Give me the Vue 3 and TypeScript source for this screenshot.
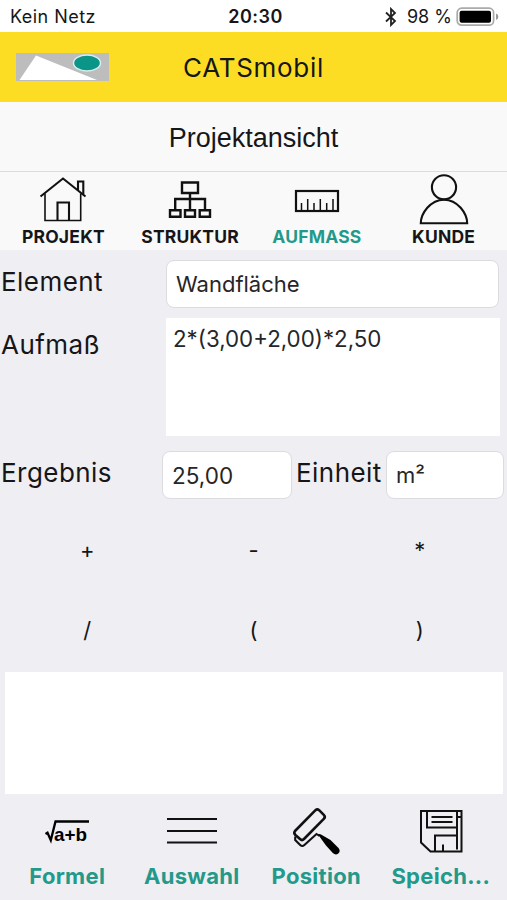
<script setup lang="ts">
import { ref } from 'vue'

interface Item {
  id: string
  label: string
}

const tabs: Item[] = [
  { id: 'projekt', label: 'PROJEKT' },
  { id: 'struktur', label: 'STRUKTUR' },
  { id: 'aufmass', label: 'AUFMASS' },
  { id: 'kunde', label: 'KUNDE' },
]
const actions: Item[] = [
  { id: 'formel', label: 'Formel' },
  { id: 'auswahl', label: 'Auswahl' },
  { id: 'position', label: 'Position' },
  { id: 'speichern', label: 'Speich...' },
]
const keys = ['+', '-', '*', '/', '(', ')']

const activeTab = ref('aufmass')
const element = ref('Wandfläche')
const formula = ref('2*(3,00+2,00)*2,50')
const result = ref('25,00')
const unit = ref('m²')

function append(key: string): void {
  formula.value += key
}
</script>

<template>
  <div class="screen">
    <div class="status">
      <span class="carrier">Kein Netz</span>
      <span class="clock">20:30</span>
      <span class="power">
        <svg class="bluetooth" width="14" height="20" viewBox="0 0 14 20">
          <path d="M2 5.5 11 14 7 18V2l4 4-9 8.5" fill="none" stroke="#222" stroke-width="1.8" />
        </svg>
        <span class="percent">98 %</span>
        <svg class="battery" width="43" height="20" viewBox="0 0 43 20">
          <rect x="1.2" y="1.2" width="36.4" height="17" rx="4.5" fill="#fff" stroke="#aaa" stroke-width="1.7" />
          <rect x="3.6" y="3.7" width="31.4" height="12" rx="2" fill="#000" />
          <path d="M40 6.5q2.4 1 2.4 3.2T40 13z" fill="#999" />
        </svg>
      </span>
    </div>

    <header class="brand">
      <svg class="logo" width="93" height="28" viewBox="0 0 93 28">
        <rect width="93" height="28" fill="#bdbdbd" />
        <path d="M3.5 27 20 2.5 81 27z" fill="#fff" />
        <ellipse cx="71" cy="10" rx="13.5" ry="8" fill="#0b9488" stroke="#d5efec" stroke-width="1.5" />
      </svg>
      <h1 class="app-name">CATSmobil</h1>
    </header>

    <div class="view-title"><h2>Projektansicht</h2></div>

    <nav class="tabs">
      <button
        v-for="tab in tabs"
        :key="tab.id"
        class="tab"
        :class="{ active: tab.id === activeTab }"
        @click="activeTab = tab.id"
      >
        <svg width="54" height="56" viewBox="0 1 54 56" fill="none" stroke="#111" stroke-width="1.8">
          <g v-if="tab.id === 'projekt'">
            <path d="M4.5 25.5 27 7.5 49.5 25.5" stroke-width="2.1" />
            <path d="M9 22.5V49.5H44.7V22.5" stroke-width="1.6" />
            <path d="M21.5 49V31.5H33V49" stroke-width="2.1" />
            <path d="M42 19V10.5h5.3V23.5" stroke-width="2.1" />
          </g>
          <g v-else-if="tab.id === 'struktur'" stroke-width="2.4">
            <path d="M19 11.5H35V22H19zM27 22v17M12.2 39V28H42V39" />
            <path d="M7 39.2h10.5v6.6H7zM22 39.2h10v6.6H22zM36.7 39.2h10.3v6.6H36.7z" />
          </g>
          <g v-else-if="tab.id === 'aufmass'">
            <rect x="6" y="20" width="42" height="20" stroke-width="2.2" />
            <path d="M11.5 39v-7M17.7 39V28M24 39v-7M30.3 39V28M36.7 39v-7M43 39V28" stroke-width="1.5" />
          </g>
          <g v-else stroke-width="2.1">
            <circle cx="27" cy="16.3" r="12.1" />
            <path d="M3.800 52.300q0-8 6.500-15.500Q17.500 28.700 27 28.700t16.700 8Q50.200 44.300 50.200 52.300z" />
          </g>
        </svg>
        <span class="tab-label">{{ tab.label }}</span>
      </button>
    </nav>

    <main class="form">
      <div class="row element-row">
        <label for="element">Element</label>
        <input id="element" v-model="element" class="field" />
      </div>
      <div class="row formula-row">
        <label for="formula" class="formula-label">Aufmaß</label>
        <textarea id="formula" v-model="formula" class="area" spellcheck="false"></textarea>
      </div>
      <div class="row result-row">
        <label for="result" class="result-label">Ergebnis</label>
        <input id="result" v-model="result" class="field result" />
        <label for="unit" class="unit-label">Einheit</label>
        <input id="unit" v-model="unit" class="field unit" />
      </div>
      <div class="keypad">
        <button v-for="key in keys" :key="key" class="key" @click="append(key)">{{ key }}</button>
      </div>
      <div class="output"></div>
    </main>

    <footer class="actions">
      <button v-for="action in actions" :key="action.id" class="action">
        <svg width="54" height="54" viewBox="0 0 54 54" fill="none" stroke="#111" stroke-width="2">
          <g v-if="action.id === 'formel'">
            <path d="M5.500 28l2-1.300 3.300 7.500 4.700-18.700H49" stroke="#000" stroke-width="2.300" />
            <text class="root-text" x="14" y="34.600" textLength="33" lengthAdjust="spacingAndGlyphs">a+b</text>
          </g>
          <path v-else-if="action.id === 'auswahl'" d="M2 13H52M2 25H52M2 36.500H52" />
          <g v-else-if="action.id === 'position'">
            <path d="M6 25 26.500 4.200q1.800-1.700 3.600 0l4.700 4.700q2 2 0 4L15 33q-2 2-4 0l-4.600-4q-2-2-.4-4z" stroke-width="2.600" />
            <path d="M6.200 30.500V34l5 5q2 2 4.200 0L27.500 28l3 2" stroke-width="2.100" />
            <path d="M29 28.500q1.500-1 3 0l9.500 5.500 8 8q2.500 3-.2 5.500-2.700 2-5.500-.5L37 39.500z" fill="#000" stroke="none" />
          </g>
          <g v-else>
            <path d="M7 5H47.500V45.500H16.500l-9.500-9zM13 5.500V21.500H43V5.500M43 11H47.500M43 12.500V43.500M21 45.500V29.500H43" />
            <path d="M17.500 11H38.500M17.500 16H38.500M29 45.500V38.500" />
          </g>
        </svg>
        <span class="action-label">{{ action.label }}</span>
      </button>
    </footer>
  </div>
</template>

<style>
body {
  margin: 0;
  background: #efeef3;
}
</style>

<style scoped>
.screen {
  display: flex;
  flex-direction: column;
  width: 507px;
  height: 900px;
  overflow: hidden;
  background: #efeef3;
  color: #161618;
  font-family: Inter, "Liberation Sans", sans-serif;
}
* {
  box-sizing: border-box;
}
button {
  padding: 0;
  border: 0;
  background: none;
  color: inherit;
  font: inherit;
}
svg {
  display: block;
  flex: none;
}
.status {
  display: grid;
  grid-template-columns: 1fr auto 1fr;
  align-items: center;
  height: 32px;
  padding: 1px 8px 0 10px;
  background: #fff;
  font-size: 18px;
}
.carrier {
  letter-spacing: 0.45px;
}
.clock {
  padding-left: 2px;
  font-weight: 600;
  letter-spacing: 0.5px;
}
.power {
  display: flex;
  align-items: center;
  justify-content: flex-end;
}
.percent {
  margin: 0 4px 0 9px;
}
.brand {
  display: grid;
  grid-template-columns: 1fr auto 1fr;
  align-items: center;
  height: 70px;
  padding: 0 16px;
  background: #fcdd24;
}
h1,
h2 {
  margin: 0;
  font-weight: 400;
}
.app-name {
  font-size: 26px;
  letter-spacing: 0.7px;
}
.view-title {
  display: flex;
  align-items: center;
  justify-content: center;
  height: 70px;
  padding-top: 3px;
  border-bottom: 1px solid #dcdcdc;
  background: #f9f9f9;
}
h2 {
  font-family: "Liberation Sans", sans-serif;
  font-size: 27px;
}
.tabs {
  display: grid;
  grid-template-columns: repeat(4, 1fr);
  height: 78px;
  background: #f9f9f9;
}
.tab {
  display: flex;
  flex-direction: column;
  align-items: center;
}
.tab-label {
  margin-top: -2px;
  font-size: 17.5px;
  font-weight: 650;
  line-height: 22px;
  letter-spacing: 0.2px;
}
.tab.active {
  color: #23998a;
}
.form {
  display: flex;
  flex-direction: column;
}
.row {
  display: flex;
  align-items: flex-start;
}
label {
  padding: 11px 0 0 1px;
  font-size: 26px;
  line-height: 32px;
  letter-spacing: 0.45px;
}
.element-row {
  height: 68px;
  padding: 10px 8px 0 0;
}
.element-row label,
.formula-label {
  width: 166px;
}
.element-row label {
  padding-top: 6px;
}
.field {
  flex: 1;
  min-width: 0;
  height: 48px;
  padding: 0 9px;
  border: 1px solid #dcdce0;
  border-radius: 8px;
  outline: none;
  background: #fff;
  color: #262628;
  font: 400 22px Inter, sans-serif;
}
.formula-row {
  height: 118px;
  padding-right: 7px;
}
.area {
  flex: 1;
  min-width: 0;
  height: 118px;
  padding: 7px 7px;
  border: 0;
  outline: none;
  resize: none;
  background: #fff;
  color: #262628;
  font: 400 22.3px/28px Inter, sans-serif;
}
.result-row {
  height: 64px;
  padding: 15px 3px 0 0;
}
.result-row label {
  padding-top: 6px;
}
.result-label {
  width: 162px;
}
.result {
  flex: none;
  width: 130px;
  font-size: 22.5px;
}
.result-row .unit-label {
  width: 94px;
  padding-left: 4px;
}
.keypad {
  display: grid;
  grid-template-columns: repeat(3, 1fr);
  grid-template-rows: repeat(2, 80px);
  height: 172px;
  padding: 10px 4px 0;
}
.key {
  font-size: 22px;
}
.output {
  height: 122px;
  margin: 0 4px 0 5px;
  background: #fff;
}
.actions {
  display: grid;
  grid-template-columns: repeat(4, 1fr);
  padding: 12px 4px 0 5px;
}
.action {
  display: flex;
  flex-direction: column;
  align-items: center;
}
.action-label {
  margin-top: 2px;
  color: #23998a;
  font-size: 22px;
  font-weight: 650;
  line-height: 28px;
  letter-spacing: 0.3px;
}
.root-text {
  fill: #000;
  stroke: none;
  font: 700 19px "Liberation Sans", sans-serif;
}
</style>
